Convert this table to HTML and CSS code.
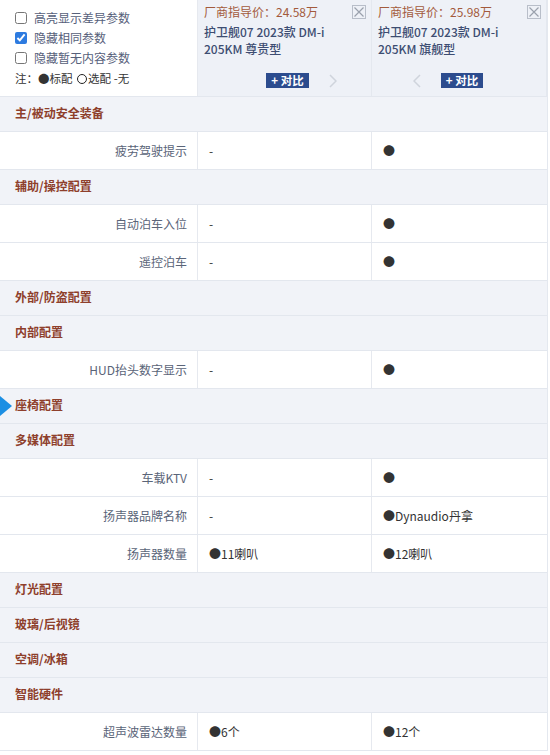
FILE: index.html
```html
<!DOCTYPE html>
<html lang="zh">
<head>
<meta charset="utf-8">
<link rel="stylesheet" href="styles.css">
</head>
<body>
<div class="table">
  <div class="head">
    <div class="opts">
      <label class="opt"><input type="checkbox"><span>高亮显示差异参数</span></label>
      <label class="opt"><input type="checkbox" checked><span>隐藏相同参数</span></label>
      <label class="opt"><input type="checkbox"><span>隐藏暂无内容参数</span></label>
      <div class="legend">注：●标配 <span class="ring"></span>选配 -无</div>
    </div>
    <div class="car">
      <div class="price">厂商指导价：24.58万</div>
      <svg class="close" width="14" height="14" viewBox="0 0 14 14"><rect x="0.5" y="0.5" width="13" height="13" fill="none" stroke="#b8bec9"/><path d="M2.5 2.5 L11.5 11.5 M11.5 2.5 L2.5 11.5" stroke="#9aa1ad" stroke-width="1.2"/></svg>
      <div class="name">护卫舰07 2023款 DM-i<br>205KM 尊贵型</div>
      <div class="act">
        <span class="cmp">+ 对比</span>
        <svg class="chev right" width="8" height="14" viewBox="0 0 8 14"><path d="M1 1 L7 7 L1 13" fill="none" stroke="#cfd4dc" stroke-width="1.5"/></svg>
      </div>
    </div>
    <div class="car">
      <div class="price">厂商指导价：25.98万</div>
      <svg class="close" width="14" height="14" viewBox="0 0 14 14"><rect x="0.5" y="0.5" width="13" height="13" fill="none" stroke="#b8bec9"/><path d="M2.5 2.5 L11.5 11.5 M11.5 2.5 L2.5 11.5" stroke="#9aa1ad" stroke-width="1.2"/></svg>
      <div class="name">护卫舰07 2023款 DM-i<br>205KM 旗舰型</div>
      <div class="act">
        <svg class="chev left" width="8" height="14" viewBox="0 0 8 14"><path d="M7 1 L1 7 L7 13" fill="none" stroke="#cfd4dc" stroke-width="1.5"/></svg>
        <span class="cmp">+ 对比</span>
      </div>
    </div>
  </div>

  <div class="sec">主/被动安全装备</div>
  <div class="row"><div class="lab">疲劳驾驶提示</div><div class="val">-</div><div class="val">●</div></div>
  <div class="sec">辅助/操控配置</div>
  <div class="row"><div class="lab">自动泊车入位</div><div class="val">-</div><div class="val">●</div></div>
  <div class="row"><div class="lab">遥控泊车</div><div class="val">-</div><div class="val">●</div></div>
  <div class="sec">外部/防盗配置</div>
  <div class="sec">内部配置</div>
  <div class="row"><div class="lab">HUD抬头数字显示</div><div class="val">-</div><div class="val">●</div></div>
  <div class="sec active">座椅配置</div>
  <div class="sec">多媒体配置</div>
  <div class="row"><div class="lab">车载KTV</div><div class="val">-</div><div class="val">●</div></div>
  <div class="row"><div class="lab">扬声器品牌名称</div><div class="val">-</div><div class="val">●Dynaudio丹拿</div></div>
  <div class="row"><div class="lab">扬声器数量</div><div class="val">●11喇叭</div><div class="val">●12喇叭</div></div>
  <div class="sec">灯光配置</div>
  <div class="sec">玻璃/后视镜</div>
  <div class="sec">空调/冰箱</div>
  <div class="sec">智能硬件</div>
  <div class="row"><div class="lab">超声波雷达数量</div><div class="val">●6个</div><div class="val">●12个</div></div>
</div>
</body>
</html>
```

FILE: styles.css
```css
* { box-sizing: border-box; }
body {
  margin: 0;
  background: #fff;
  font-family: "Noto Sans CJK SC", "Noto Sans", sans-serif;
  font-size: 12px;
  color: #333;
}
.table {
  width: 548px;
  border-right: 1px solid #e4e8ef;
}
.head {
  display: grid;
  grid-template-columns: 198px 174px 175px;
  height: 97px;
  border-bottom: 1px solid #e3e7ee;
}
.opts {
  padding: 8px 0 0 15px;
  border-right: 1px solid #e6e9ef;
  color: #56607a;
}
.opt {
  display: flex;
  align-items: center;
  height: 20px;
  line-height: 20px;
}
.opt input {
  margin: 0 7px 0 0;
  width: 12px;
  height: 12px;
  accent-color: #2d7be0;
}
.legend {
  height: 20px;
  line-height: 20px;
  color: #333;
  font-size: 11.5px;
}
.ring {
  display: inline-block;
  width: 10px;
  height: 10px;
  border: 1.5px solid #222;
  border-radius: 50%;
  margin: 0 1px 0 2px;
  vertical-align: -1px;
}
.car {
  position: relative;
  background: #eef1f7;
  border-right: 1px solid #e4e8ef;
  padding: 3px 0 0 6px;
}
.price {
  color: #a35a3c;
  line-height: 18px;
}
.close {
  position: absolute;
  right: 5px;
  top: 5px;
}
.name {
  margin-top: 2px;
  color: #3d4d72;
  font-weight: 500;
  line-height: 17px;
}
.act {
  display: flex;
  align-items: center;
  justify-content: center;
  gap: 20px;
  margin-top: 15px;
  height: 17px;
}
.cmp {
  background: #2c4c8e;
  color: #fff;
  font-weight: 700;
  font-size: 11.5px;
  line-height: 15px;
  padding: 0 5px;
}
.chev.right { margin-right: -28px; }
.chev.left { margin-left: -28px; }
.sec {
  position: relative;
  height: 35px;
  line-height: 32px;
  padding-left: 15px;
  background: #f1f3f8;
  border-bottom: 1px solid #e3e7ee;
  color: #8e3f2c;
  font-weight: 700;
}
.sec.active::before {
  content: "";
  position: absolute;
  left: 0;
  top: 7px;
  border-left: 12px solid #1c8fe3;
  border-top: 10px solid transparent;
  border-bottom: 10px solid transparent;
}
.row {
  display: grid;
  grid-template-columns: 198px 174px 175px;
  height: 38px;
  border-bottom: 1px solid #e3e7ee;
}
.lab {
  text-align: right;
  padding-right: 10px;
  line-height: 37px;
  color: #5a6478;
  border-right: 1px solid #e6e9ef;
}
.val {
  padding-left: 11px;
  line-height: 37px;
  color: #333;
  border-right: 1px solid #e6e9ef;
}
.val:last-child { border-right: none; }
```
